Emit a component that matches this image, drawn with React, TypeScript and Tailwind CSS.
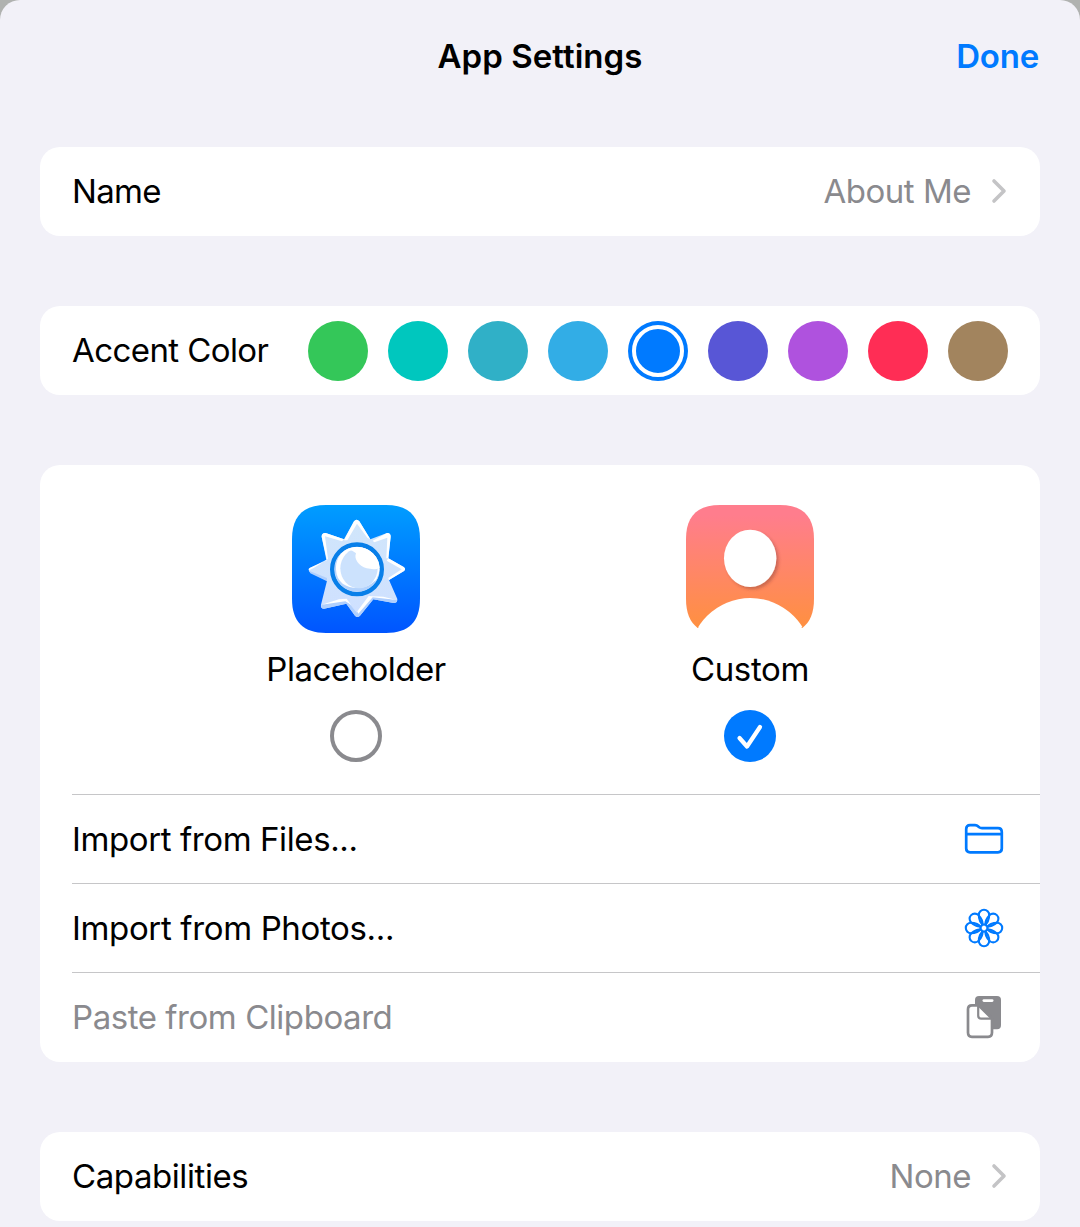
import type { ReactNode } from 'react';

const accents = [
  { name: 'Green', fill: 'bg-[#34c759]' },
  { name: 'Mint', fill: 'bg-[#00c7be]' },
  { name: 'Teal', fill: 'bg-[#30b0c7]' },
  { name: 'Cyan', fill: 'bg-[#32ade6]' },
  { name: 'Blue', fill: 'bg-[#007aff]', selected: true },
  { name: 'Indigo', fill: 'bg-[#5856d6]' },
  { name: 'Purple', fill: 'bg-[#af52de]' },
  { name: 'Pink', fill: 'bg-[#ff2d55]' },
  { name: 'Brown', fill: 'bg-[#a2845e]' },
];

function Card({ children }: { children: ReactNode }) {
  return <section className="rounded-[20px] bg-white">{children}</section>;
}

function Chevron() {
  return (
    <svg className="ml-[20px] h-[26px] w-[16px]" viewBox="0 0 16 26" fill="none">
      <path d="M3 3 L13 13 L3 23" stroke="#c4c4c6" strokeWidth="3.6" strokeLinecap="round" strokeLinejoin="round" />
    </svg>
  );
}

function LinkRow({ label, value }: { label: ReactNode; value: ReactNode }) {
  return (
    <Card>
      <div className="flex h-[89px] items-center pr-[33px] pb-px pl-8">
        {label}
        <div className="ml-auto flex items-center text-[#8a8a8e]">
          {value}
          <Chevron />
        </div>
      </div>
    </Card>
  );
}

function SunIcon() {
  return (
    <svg className="size-[128px]" viewBox="18 21 384 384">
      <defs>
        <linearGradient id="sky" x1="0" y1="0" x2="0" y2="1">
          <stop offset="0" stopColor="#009dff" />
          <stop offset="1" stopColor="#0055ff" />
        </linearGradient>
        <linearGradient id="ray" x1="0" y1="0" x2="0" y2="1">
          <stop offset="0" stopColor="#d0e6fb" />
          <stop offset="1" stopColor="#cfe0ff" />
        </linearGradient>
      </defs>
      <path d="M120 21 H300 C368 21 402 55 402 123 V303 C402 371 368 405 300 405 H120 C52 405 18 371 18 303 V123 C18 55 52 21 120 21Z" fill="url(#sky)" />
      <path d="M204 70 Q212 61 220 70 L253 124 L303 105 Q314 104 314 116 L307 181 L353 207 Q361 213 354 219 L309 246 L334 303 Q335 315 323 315 L262 304 L222 353 Q214 361 207 353 L181 317 L114 332 Q103 332 105 320 L123 248 L71 222 Q65 215 72 210 L121 185 L107 116 Q107 104 119 105 L174 124Z" fill="url(#ray)" />
      <path d="M174 127 L204 70 Q212 61 220 70 L253 124 L244 119 L213 77 L184 127Z M123 187 L107 116 Q107 104 119 105 L174 124 L168 130 L117 115 L126 183 L83 210 L69 217 Q65 213 72 209Z M260 128 L303 105 Q314 104 314 116 L307 181 L301 181 L304 119 L265 133Z M307 181 L353 207 Q361 213 354 219 L309 246 L307 240 L347 214 L302 188Z" fill="white" />
      <path d="M69 218 L123 240 V250 L73 226Z M107 320 L178 302 L213 345 L252 293 L333 307 Q334 315 323 315 L262 304 L222 353 Q214 361 207 353 L181 317 L114 332 Q103 332 107 320Z" fill="#b0cffd" />
      <path d="M107 320 L159 304 L182 302 L195 320 L178 310Z M248 294 L292 296 L328 305 L260 298 L217 347 L214 340Z" fill="white" />
      <circle cx="213" cy="214" r="74.500" fill="#cce1fd" stroke="#087fe9" strokeWidth="13" />
      <circle cx="213" cy="214" r="67" fill="#b4d3fc" />
      <path d="M213 147 C173 147 148 177 150 215 C152 253 180 270 215 270 C250 269 280 247 280 214 C280 177 250 147 213 147Z" fill="white" />
      <ellipse cx="219" cy="211" rx="56" ry="60" fill="#cce2fd" />
      <path d="M182 156 Q213 140 246 155 Q279 174 281 209 C270 215 257 214 242 211 C218 204 203 183 210 166 Q199 155 182 156Z" fill="white" />
      <path d="M264 247 Q267 238 273 237 Q272 246 266 250Z" fill="white" />
    </svg>
  );
}

function PersonIcon() {
  return (
    <svg className="size-[128px]" viewBox="18 21 384 384">
      <defs>
        <linearGradient id="sunset" x1="0" y1="0" x2="0" y2="1">
          <stop offset="0.08" stopColor="#ff7d8d" />
          <stop offset="1" stopColor="#ff9040" />
        </linearGradient>
        <filter id="shade" x="-20%" y="-20%" width="150%" height="150%">
          <feDropShadow dx="7" dy="7" stdDeviation="5" floodColor="#703030" floodOpacity="0.36" />
        </filter>
        <clipPath id="tile">
          <path d="M120 21 H300 C368 21 402 55 402 123 V303 C402 371 368 405 300 405 H120 C52 405 18 371 18 303 V123 C18 55 52 21 120 21Z" />
        </clipPath>
      </defs>
      <path d="M120 21 H300 C368 21 402 55 402 123 V303 C402 345 390 372 367 390 H53 C30 372 18 345 18 303 V123 C18 55 52 21 120 21Z" fill="url(#sunset)" />
      <g clipPath="url(#tile)">
        <ellipse cx="210.500" cy="181" rx="78.500" ry="86" fill="white" filter="url(#shade)" />
        <circle cx="211" cy="484" r="184" fill="white" />
      </g>
    </svg>
  );
}

function FolderIcon() {
  return (
    <svg className="h-[32px] w-[40px]" viewBox="0 0 40 32" fill="none" stroke="#007aff" strokeWidth="2.700">
      <path d="M2.200 6 Q2.200 2.200 6 2.200 H11 Q13 2.200 14.300 3.500 L15.200 4.300 Q16.200 5.100 18 5.100 H34 Q37.800 5.100 37.800 9 V25.500 Q37.800 29.300 34 29.300 H6 Q2.200 29.300 2.200 25.500Z M2.200 11.200 H37.800" />
    </svg>
  );
}

const petalAngles = [0, 45, 90, 135, 180, 225, 270, 315];

function PhotosIcon() {
  return (
    <svg className="size-[40px]" viewBox="-20 -20 40 40" fill="none" stroke="#007aff" strokeWidth="2.100">
      {petalAngles.map((angle) => (
        <path key={angle} transform={`rotate(${angle})`} d="M0 -3.200 C-3.600 -3.800 -5.200 -9.500 -5.200 -13 A5.200 5.200 0 0 1 5.200 -13 C5.200 -9.500 3.600 -3.800 0 -3.200Z" />
      ))}
    </svg>
  );
}

function ClipboardIcon() {
  return (
    <svg className="h-[44px] w-[36px]" viewBox="0 0 36 44" fill="none">
      <path d="M13 1 H31 Q35 1 35 5 V30 Q35 34.300 31 34.300 H24 L9 12 V5 Q9 1 13 1Z" fill="#8a8a8e" />
      <rect x="16.500" y="4.300" width="11" height="2.600" rx="1.300" fill="white" />
      <path d="M6 10.300 H11.500 Q12.700 10.300 13.600 11.200 L25.200 22.800 Q26 23.600 26 24.800 V37.500 Q26 41.800 22 41.800 H6 Q2 41.800 2 37.500 V14.300 Q2 10.300 6 10.300Z" fill="white" stroke="#8a8a8e" strokeWidth="2.700" />
      <path d="M12.200 11 V20.500 Q12.200 23.700 15.200 23.700 H25.500" stroke="#8a8a8e" strokeWidth="2.200" />
    </svg>
  );
}

function ImportRow({ label, icon, muted = false }: { label: ReactNode; icon: ReactNode; muted?: boolean }) {
  return (
    <div className={`ml-8 flex h-[89px] items-center border-t border-[#c6c6c8] ${muted ? 'text-[#8a8a8e]' : ''}`}>
      {label}
      <div className="ml-auto flex w-[112px] items-center justify-center">{icon}</div>
    </div>
  );
}

export default function App() {
  return (
    <div className="h-[1227px] w-[1080px] overflow-hidden bg-[#b0b2b0]">
      <main className="h-full rounded-t-[20px] bg-[#f2f1f8] px-10 font-['Inter',sans-serif] text-[33px] leading-[40px] whitespace-nowrap text-black">
        <header className="grid h-[147px] grid-cols-3 pt-9 font-semibold">
          <h1 className="col-start-2 text-center tracking-[0.05px]">App Settings</h1>
          <button className="h-10 justify-self-end pr-px tracking-[-0.2px] text-[#007aff]">Done</button>
        </header>

        <div className="flex flex-col gap-[70px]">
          <LinkRow
            label={<span className="tracking-[-0.65px]">Name</span>}
            value={<span className="tracking-[-0.5px]">About Me</span>}
          />

          <Card>
            <div className="flex h-[89px] items-center justify-between pr-8 pl-8">
              <span className="pb-0.5 tracking-[-0.58px]">Accent Color</span>
              <div className="flex gap-5">
                {accents.map((a) => (
                  <button key={a.name} aria-label={a.name} className={`flex size-[60px] items-center justify-center rounded-full ${a.fill}`}>
                    {a.selected && <span className="size-[52px] rounded-full border-4 border-white" />}
                  </button>
                ))}
              </div>
            </div>
          </Card>

          <Card>
            <div className="flex h-[329px] justify-center gap-[194px] pt-10 pl-[26px]">
              <div className="flex w-[200px] flex-col items-center">
                <SunIcon />
                <span className="mt-4 tracking-[-0.5px]">Placeholder</span>
                <span className="mt-[21px] size-[52px] rounded-full border-4 border-[#8a8a8e]" />
              </div>
              <div className="flex w-[200px] flex-col items-center">
                <PersonIcon />
                <span className="mt-4 tracking-[-0.35px]">Custom</span>
                <svg className="mt-[21px] size-[52px]" viewBox="0 0 52 52">
                  <circle cx="26" cy="26" r="26" fill="#007aff" />
                  <path d="M15.500 28 L23 36.500 L36 17" fill="none" stroke="white" strokeWidth="4.200" strokeLinecap="round" strokeLinejoin="round" />
                </svg>
              </div>
            </div>
            <ImportRow label={<span className="tracking-[-0.4px]">Import from Files...</span>} icon={<FolderIcon />} />
            <ImportRow label={<span className="tracking-[-0.35px]">Import from Photos...</span>} icon={<PhotosIcon />} />
            <ImportRow label={<span className="tracking-[-0.45px]">Paste from Clipboard</span>} icon={<ClipboardIcon />} muted />
            <div className="h-px" />
          </Card>

          <LinkRow
            label={<span className="tracking-[-0.42px]">Capabilities</span>}
            value={<span className="tracking-[-0.5px]">None</span>}
          />
        </div>
      </main>
    </div>
  );
}
